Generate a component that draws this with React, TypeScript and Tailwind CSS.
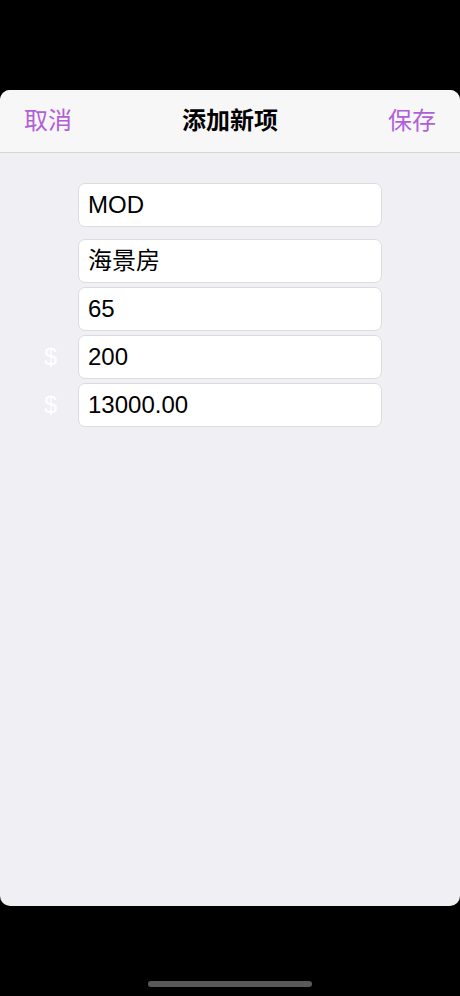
import React from 'react';

const fields = [
    { value: 'MOD', prefix: '', gapTop: false },
    { value: '海景房', prefix: '', gapTop: true },
    { value: '65', prefix: '', gapTop: false },
    { value: '200', prefix: '$', gapTop: false },
    { value: '13000.00', prefix: '$', gapTop: false },
];

export default function App() {
    return (
        <div
            className="w-[460px] h-[996px] bg-black flex flex-col overflow-hidden"
            style={{ fontFamily: '"Liberation Sans", "Noto Sans CJK SC", sans-serif' }}
        >
            <div className="h-[90px] shrink-0" />

            {/* Sheet */}
            <div className="h-[816px] shrink-0 rounded-[10px] overflow-hidden bg-[#efeff4] flex flex-col">
                {/* Nav bar */}
                <div className="h-[63px] shrink-0 bg-[#f7f7f8] border-b border-[#d6d6d8] flex items-center justify-between px-[24px] relative">
                    <span className="text-[24px] text-[#b05fd8] leading-none">取消</span>
                    <span className="absolute left-1/2 -translate-x-1/2 text-[24px] font-bold text-black leading-none">
                        添加新项
                    </span>
                    <span className="text-[24px] text-[#b05fd8] leading-none">保存</span>
                </div>

                {/* Form */}
                <div className="flex flex-col pt-[30px]">
                    {fields.map((f, i) => (
                        <div
                            key={i}
                            className={`flex items-center ${f.gapTop ? 'mt-[12px]' : i === 0 ? '' : 'mt-[4px]'}`}
                        >
                            <div className="w-[78px] shrink-0 flex justify-end pr-[21px]">
                                <span className="text-[23px] text-white leading-none">{f.prefix}</span>
                            </div>
                            <div className="w-[304px] h-[44px] bg-white border border-[#dcdcdf] rounded-[7px] flex items-center pl-[9px]">
                                <span className="text-[24px] text-black leading-none">{f.value}</span>
                            </div>
                        </div>
                    ))}
                </div>
            </div>

            {/* Home indicator */}
            <div className="flex-1 flex items-end justify-center pb-[9px]">
                <div className="w-[164px] h-[6px] rounded-full bg-[#5a5a5a]" />
            </div>
        </div>
    );
}
